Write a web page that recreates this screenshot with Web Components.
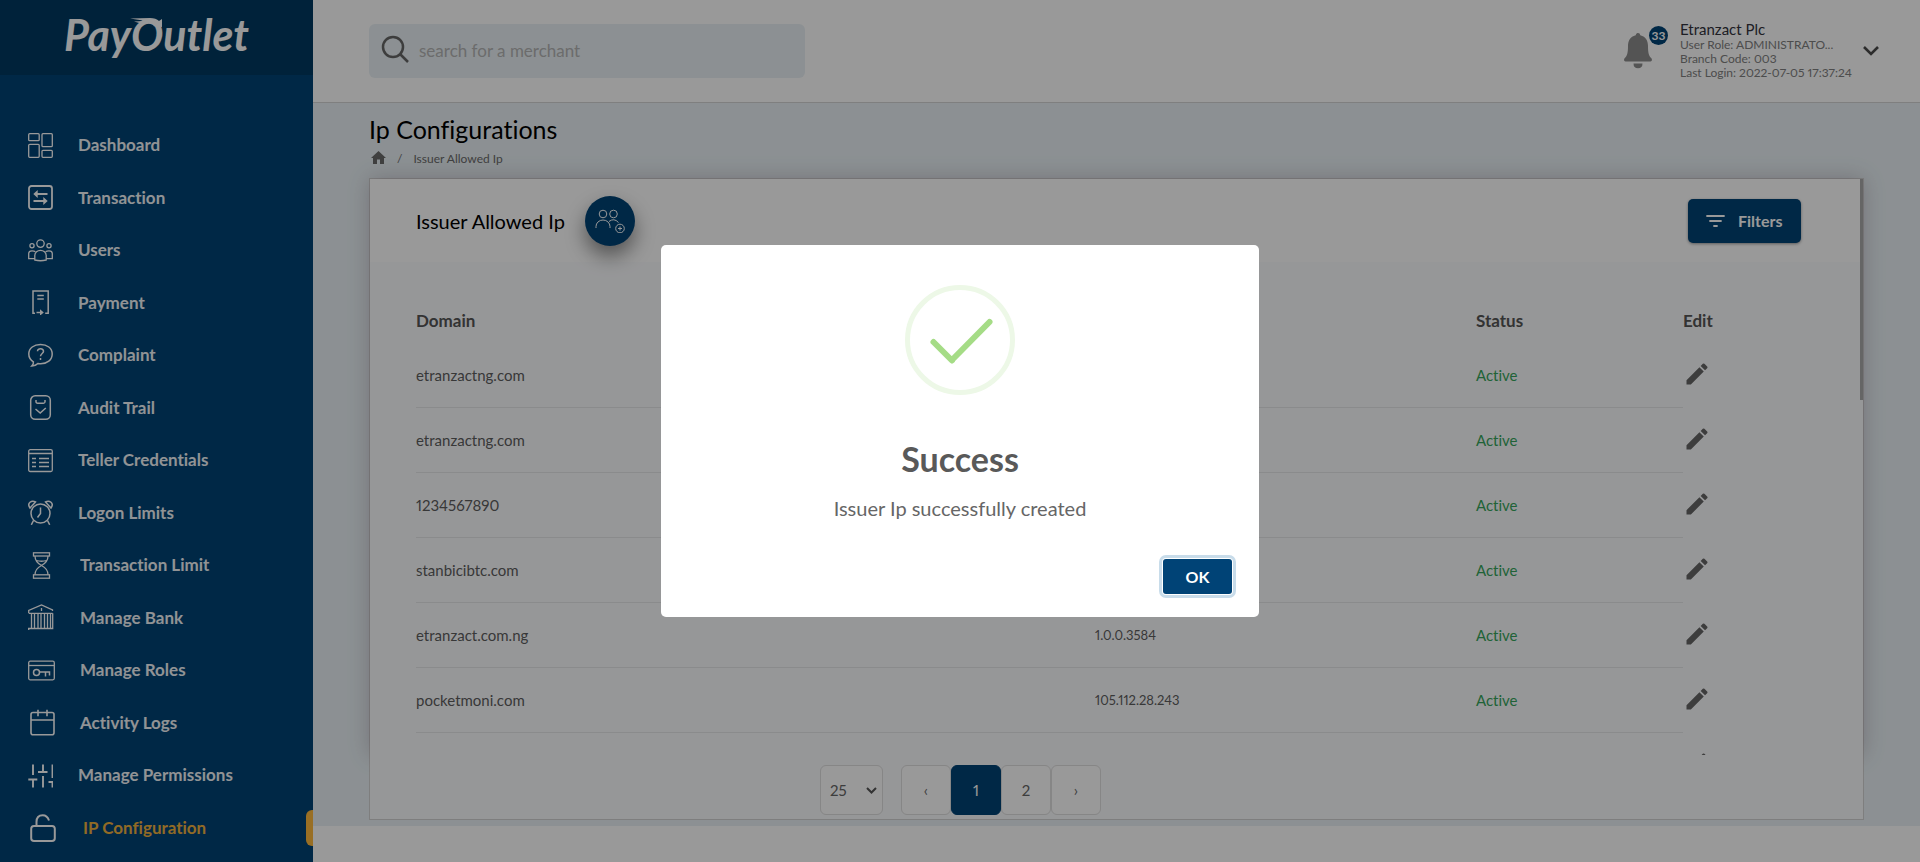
<!DOCTYPE html>
<html lang="en">
<head>
<meta charset="utf-8">
<title>PayOutlet - Ip Configurations</title>
<style>
  body { margin: 0; font-family: Lato, "Liberation Sans", sans-serif; font-variant-ligatures: none; font-variant-numeric: proportional-nums; color: #000; background: #fff; }
</style>
</head>
<body>
<pay-app></pay-app>
<success-dialog heading="Success">Issuer Ip successfully created</success-dialog>
<script>
const BASE = '*{box-sizing:border-box}svg{display:block}button,input,select{font:inherit;font-variant-ligatures:none;margin:0}h1,h2,p,ul{margin:0;padding:0;font-weight:400}';

/* Adds an open shadow root holding the given styles and markup. */
function render(el, css, html) {
  const t = document.createElement('template');
  t.innerHTML = `<style>${BASE}${css}</style>${html}`;
  el.attachShadow({ mode: 'open' }).append(t.content.cloneNode(true));
}

/* Menu icons: [width, height, shapes], one user unit per pixel. */
const ICONS = {
  dashboard: [25, 25, '<g stroke-width="1.3"><rect x=".7" y=".7" width="10.5" height="7" rx="1"/><rect x=".7" y="11.3" width="10.5" height="13" rx="1"/><rect x="14" y=".7" width="10.3" height="13" rx="1"/><rect x="14" y="17.3" width="10.3" height="7" rx="1"/></g>'],
  transaction: [25, 25, '<rect x="1" y="1" width="23" height="23" rx="2.5" stroke-width="1.8"/><path stroke-width="1.8" d="M8 9h11.5M5.5 16H17"/><path fill="currentColor" stroke="none" d="M5.3 9l4.4-4v8zM19.7 16l-4.4-4v8z"/>'],
  users: [25, 25, '<g stroke-width="1.3"><circle cx="12.5" cy="5.6" r="3.7"/><circle cx="4" cy="7.8" r="2.1"/><circle cx="21" cy="7.8" r="2.1"/><path d="M6.8 22v-4.500a5.700 5.200 0 0 1 11.400 0V22q-5.700 1.500-11.400 0zM6.800 20.600H.7v-5q0-2.800 3.300-2.800 2.200 0 3.300.9M18.200 20.600h6.100v-5q0-2.800-3.300-2.800-2.200 0-3.300.9"/></g>'],
  payment: [25, 25, '<path stroke-width="1.5" d="M7 23.200H5V1h15.200v22.200h-3M9.300 5.500h6.500M9.300 9h6.500"/><path stroke-width="1.500" d="M8.500 22.500H14"/><path fill="currentColor" stroke="none" d="M12 19.300l3.800 3.200-3.800 3.200z"/>'],
  complaint: [25, 25, '<path stroke-width="1.5" d="M12.500 1.500C19 1.500 24.200 5 24.200 11s-5.200 9.800-11.500 9.800c-1 0-2-.1-2.800-.2-1.600 1.700-3.900 2.300-6 2.300 1.200-1.100 1.700-2.500 1.500-4C2.500 17 .8 14.300.8 11 .8 5 6 1.500 12.500 1.500z"/><path stroke-width="1.500" d="M9.500 8.300c0-3.600 6-3.400 6 0 0 2.200-3 2.200-3 5M12.500 15v2"/>'],
  audit: [25, 25, '<rect x="2.700" y=".8" width="19.600" height="23.400" rx="4.500" stroke-width="1.500"/><path stroke-width="1.500" d="M8 5v2q.3 1.200 1.500 1.200h6Q16.800 8.200 17 7V5M7.500 14l4.700 4 5.600-5"/>'],
  teller: [25, 25, '<rect x=".7" y="1.700" width="23.600" height="21.800" rx="1.500" stroke-width="1.300"/><path stroke-width="1.300" d="M1 5.500h23M4 10.500h4M11 10.500h10M4 14.500h4M11 14.500h10M4 18.500h4M11 18.500h10"/>'],
  logon: [25, 25, '<circle cx="12.500" cy="13.500" r="9.500" stroke-width="1.500"/><path stroke-width="1.500" d="M12.500 7.500v6l-3 4M5.500 20.500L3.300 24.800M19.500 20.500l2.200 4.300M2 8Q-.5 4.500 2 2.300 4.500.2 7.500 2zM23 8q2.500-3.500 0-5.700Q20.500.2 17.500 2z"/>'],
  limit: [27, 27, '<g stroke-width="1.300"><rect x="5.500" y=".8" width="16" height="3.200"/><rect x="5.500" y="22.800" width="16" height="3.400"/><path d="M7 4q0 6 6.500 9.500Q20 10 20 4M7 22.800q0-6 6.500-9.300Q20 16.800 20 22.800M8.500 8.500Q13.500 10 18.500 8.500"/></g>'],
  bank: [27, 27, '<path stroke-width="1.300" d="M.7 9V6.500L13.500 1l11 5v1M.7 9.300h24M0 24.500h24.700V9.300M.7 26v-1.500M3.500 9.500v15M6.500 9.500v15M10 9.500v15M13 9.500v15M16.500 9.500v15M19.500 9.500v15M22.500 9.500v15M13.500 4v3"/>'],
  roles: [27, 27, '<rect x=".7" y="4.200" width="25.600" height="18.600" rx="1.500" stroke-width="1.300"/><path stroke-width="1.300" d="M1 8.500h25"/><circle cx="8.500" cy="15.500" r="3" stroke-width="1.500"/><path stroke-width="1.500" d="M11.500 15h10v3.500M17.500 15v4.500"/>'],
  activity: [27, 27, '<rect x="3" y="3.500" width="23" height="22.300" rx="2" stroke-width="1.600"/><path stroke-width="1.600" d="M3 11h23M10 .8v6.500M19 .8v6.500"/>'],
  permissions: [25, 25, '<path stroke-width="1.900" d="M5 1.500V12M5 17v7.500M.3 16.500h9M15 1.500V9M15 13v11.500M10 9h9.500M24.500 1.500V15M25 19h-4.500M24.500 19v5.500"/>'],
  ip: [30, 30, '<rect x="3.200" y="13" width="23.600" height="15" rx="2.800" stroke-width="2"/><path stroke-width="2" d="M8.500 13V9q0-6.700 6.200-6.700 4.500 0 6.300 5.200"/>'],
};

customElements.define('pay-icon', class extends HTMLElement {
  connectedCallback() {
    const [w, h, d] = ICONS[this.getAttribute('name')];
    render(this, ':host{display:block;flex:none}', `<svg width="${w}" height="${h}" fill="none" stroke="currentColor" aria-hidden="true">${d}</svg>`);
  }
});

customElements.define('pay-logo', class extends HTMLElement {
  connectedCallback() {
    render(this, `
      :host{display:flex;justify-content:center;height:75px;background:#003962;color:#fff}
      a{position:relative;color:inherit;text-decoration:none;font:italic 700 43px/70px Lato,"Liberation Sans",sans-serif}
      svg{position:absolute;left:66px;top:17px}`,
      `<a href="#">PayOutlet<svg width="36" height="14" fill="#fff" aria-hidden="true"><path d="M0 1.500L20 1Q26 1 29 4L32 2v8l-9-1 3-2Q22 4.500 14 5l-5-.5 4-1z"/><path d="M4 4.500l10-.5-3 2.500z"/></svg></a>`);
  }
});

customElements.define('nav-item', class extends HTMLElement {
  connectedCallback() {
    render(this, `
      :host{display:grid;position:relative;color:#fff}
      a{display:flex;align-items:center;gap:25px;padding-left:28px;color:inherit;text-decoration:none;font-size:17px;font-weight:700;line-height:20px}
      span{opacity:.95}
      :host([active]) span{color:#ffb93d}
      :host([active])::after{content:"";position:absolute;right:0;top:8px;bottom:8px;width:7px;background:#ffb93d;border-radius:6px 0 0 6px}`,
      `<a href="#"><pay-icon name="${this.getAttribute('icon')}"></pay-icon><span><slot></slot></span></a>`);
  }
});

customElements.define('side-bar', class extends HTMLElement {
  connectedCallback() {
    const items = [['dashboard', 'Dashboard'], ['transaction', 'Transaction'], ['users', 'Users'], ['payment', 'Payment'], ['complaint', 'Complaint'], ['audit', 'Audit Trail'], ['teller', 'Teller Credentials'], ['logon', 'Logon Limits'], ['limit', 'Transaction Limit'], ['bank', 'Manage Bank'], ['roles', 'Manage Roles'], ['activity', 'Activity Logs'], ['permissions', 'Manage Permissions'], ['ip', 'IP Configuration']];
    render(this, `
      :host{display:flex;flex-direction:column;background:#004376}
      nav{flex:1;display:grid;grid-auto-rows:1fr;padding:44px 0 8px}`,
      `<pay-logo></pay-logo><nav aria-label="Main">${items.map(([i, t]) => `<nav-item icon="${i}"${i === 'ip' ? ' active' : ''}>${t}</nav-item>`).join('')}</nav>`);
  }
});

customElements.define('top-bar', class extends HTMLElement {
  connectedCallback() {
    render(this, `
      :host{display:flex;align-items:center;height:103px;padding:0 41px 0 56px;background:#fff;border-bottom:1px solid #d4d4d4}
      label{display:flex;align-items:center;width:436px;height:54px;padding:0 12px;gap:10px;background:#e9f1f5;border-radius:6px}
      label svg{flex:none;margin-bottom:4px}
      input{flex:1;min-width:0;border:0;outline:0;background:none;font-size:17px;line-height:24px;padding:0}
      input::placeholder{color:#b4b4b4;opacity:1}
      button{border:0;padding:0;background:none;color:#4a4a4a}
      .bell{position:relative;margin-left:auto;margin-right:28px}
      .badge{position:absolute;left:25px;top:-7px;width:19px;height:19px;border-radius:50%;background:#004376;color:#fff;font-size:12px;line-height:19px;font-weight:700;text-align:center}
      .user{width:183px;margin-bottom:2px;font-size:12px;line-height:14px;color:#808080;white-space:nowrap}
      .user p:first-child{font-size:15px;line-height:18px;color:#32323c}`,
      `<label><svg width="28" height="28" fill="none" stroke="#666" stroke-width="2.500" aria-hidden="true"><circle cx="12" cy="12" r="10"/><path d="M19 19l8 8"/></svg><input type="search" placeholder="search for a merchant" aria-label="Search for a merchant"></label>
       <button class="bell" aria-label="Notifications"><svg width="28" height="36" fill="#8c8c8c" aria-hidden="true"><path d="M14 0q2 0 2.300 2.200C22 3.600 24 8 24 13c0 7 .8 10 3.600 12.500.8 1.600 0 3-1.100 3h-25c-1.200 0-1.900-1.400-1.100-3C3.200 23 4 20 4 13 4 8 6 3.600 11.700 2.200 12 0 14 0 14 0zM9.500 30.500h9q0 4.800-4.500 4.800t-4.500-4.800z"/></svg><span class="badge">33</span></button>
       <div class="user"><p>Etranzact Plc</p><p>User Role: ADMINISTRATO...</p><p>Branch Code: 003</p><p>Last Login: 2022-07-05 17:37:24</p></div>
       <button aria-label="Account menu"><svg width="16" height="10" fill="none" stroke="currentColor" stroke-width="2.600" aria-hidden="true"><path d="M1 1l7 7 7-7"/></svg></button>`);
  }
});

customElements.define('page-head', class extends HTMLElement {
  connectedCallback() {
    render(this, `
      :host{display:block}
      h1{font-size:25px;line-height:30px}
      nav{display:flex;align-items:center;gap:11px;height:20px;margin:4px 0 10px 2px;font-size:12px;color:#6b6b6b}
      a{color:#6b6b6b;margin-bottom:2px}`,
      `<h1>Ip Configurations</h1><nav aria-label="Breadcrumb"><a href="#" aria-label="Home"><svg width="15" height="13" fill="currentColor" aria-hidden="true"><path d="M7.500 0L15 7h-2v6H9V8.500H6V13H2V7H0z"/></svg></a><span>/</span><span>Issuer Allowed Ip</span></nav>`);
  }
});

customElements.define('ip-table', class extends HTMLElement {
  connectedCallback() {
    const rows = [['etranzactng.com', ''], ['etranzactng.com', ''], ['1234567890', ''], ['stanbicibtc.com', ''], ['etranzact.com.ng', '1.0.0.3584'], ['pocketmoni.com', '105.112.28.243'], ['', '']];
    const pencil = '<svg width="28" height="28" viewBox="0 0 24 24" fill="#666" aria-hidden="true"><path d="M3 17.250V21h3.750L17.810 9.940l-3.750-3.750L3 17.250zM20.710 7.040a1 1 0 0 0 0-1.410l-2.340-2.340a1 1 0 0 0-1.410 0l-1.830 1.830 3.750 3.750 1.830-1.830z"/></svg>';
    render(this, `
      :host{display:block;padding:37px 40px 0 46px;background:#fbfcfe}
      table{width:100%;table-layout:fixed;border-collapse:separate;border-spacing:0;text-align:left}
      .ip{width:381px}.status{width:207px}.edit{width:140px}
      th,td{padding:0}
      th{height:44px;padding-bottom:2px;font-size:17px;font-weight:700;color:#555}
      td{height:65px;font-size:15px;color:#5e5e5e;border-bottom:1px solid #e6e8ea}
      td:nth-child(2){font-size:13px}
      td:nth-child(3){color:#36a65c}
      td:last-child{padding-bottom:2px;border-bottom-color:transparent}
      button{display:block;border:0;padding:0;background:none}`,
      `<table><thead><tr><th scope="col">Domain</th><th class="ip" scope="col"></th><th class="status" scope="col">Status</th><th class="edit" scope="col">Edit</th></tr></thead><tbody>${rows.map(([d, ip]) => `<tr><td>${d}</td><td>${ip}</td><td>${d ? 'Active' : ''}</td><td><button aria-label="Edit">${pencil}</button></td></tr>`).join('')}</tbody></table>`);
  }
});

customElements.define('table-pager', class extends HTMLElement {
  connectedCallback() {
    render(this, `
      :host{display:flex;align-items:center;height:64px;padding:6px 0 0 30%;background:#fbfcfe;font-size:15px;color:#777}
      div{position:relative;margin:0 18px 0 2px}
      select{display:block;appearance:none;width:63px;height:50px;padding:0 9px;border:1px solid #dfdfdf;border-radius:6px;background:#fff;color:#666}
      div svg{position:absolute;right:6px;top:22px;pointer-events:none}
      button{width:50px;height:50px;padding:0;border:1px solid #dfdfdf;border-radius:6px;background:#fff;color:#666}
      [aria-current]{background:#004376;border-color:#004376;color:#fff}`,
      `<div><select aria-label="Rows per page"><option>25</option></select><svg width="11" height="7" fill="none" stroke="#555" stroke-width="2" aria-hidden="true"><path d="M1 1l4.500 4.500L10 1"/></svg></div><button aria-label="Previous">‹</button><button aria-current="page">1</button><button>2</button><button aria-label="Next">›</button>`);
  }
});

customElements.define('ip-card', class extends HTMLElement {
  connectedCallback() {
    render(this, `
      :host{display:block;border:1px solid #d3d3d3}
      .scroll{position:relative;height:576px;background:#fff;box-shadow:0 0 20px rgba(90,70,90,.3)}
      .clip{height:100%;overflow:hidden}
      .thumb{position:absolute;right:0;top:0;width:3px;height:221px;background:#a8a8a8}
      header{position:relative;z-index:1;display:flex;align-items:center;height:83px;padding:0 62px 0 46px}
      h2{font-size:20px;line-height:24px;margin-right:20px}
      .add{width:50px;height:50px;border:0;padding:0;border-radius:50%;background:#004376;box-shadow:0 10px 20px rgba(0,0,0,.45);display:grid;place-items:center}
      .filter{margin-left:auto;display:flex;align-items:center;gap:13px;width:113px;height:44px;padding:0 18px;border:0;border-radius:5px;background:#004376;color:#fff;font-size:16px;font-weight:700;box-shadow:0 1px 3px rgba(0,0,0,.4)}
      ip-table,table-pager{position:relative}`,
      `<div class="scroll"><div class="clip"><header><h2>Issuer Allowed Ip</h2>
        <button class="add" aria-label="Add issuer ip"><svg width="30" height="24" fill="none" stroke="#fff" aria-hidden="true"><circle cx="8" cy="5" r="3.800"/><circle cx="18.500" cy="5" r="3.800"/><path d="M1 19v-1.500a7 6.500 0 0 1 14 0V19M14 12.500q5-4 9.500 1"/><circle cx="25" cy="19.500" r="4.300"/><path d="M23 19.500h4M25 17.500v4"/></svg></button>
        <button class="filter"><svg width="19" height="12" fill="none" stroke="#fff" stroke-width="1.800" stroke-linecap="round" aria-hidden="true"><path d="M1 1h17M4 6h11M8 11h3"/></svg>Filters</button></header>
        <ip-table></ip-table></div><div class="thumb"></div></div><table-pager></table-pager>`);
  }
});

customElements.define('pay-app', class extends HTMLElement {
  connectedCallback() {
    render(this, `
      :host{display:grid;grid-template-columns:313px 1fr;min-height:100vh}
      .page{display:flex;flex-direction:column;min-width:0}
      main{padding:11px 56px 6px;background:#e9f1f5}
      footer{flex:1;background:#fff}`,
      `<side-bar></side-bar><div class="page"><top-bar></top-bar><main><page-head></page-head><ip-card></ip-card></main><footer></footer></div>`);
  }
});

customElements.define('success-dialog', class extends HTMLElement {
  connectedCallback() {
    render(this, `
      :host{position:fixed;inset:0;z-index:10;display:grid;place-items:center;background:rgba(0,0,0,.4)}
      section{display:flex;flex-direction:column;align-items:center;width:598px;padding:40px 27px 23px;border-radius:5px;background:#fff}
      h2{margin-top:43px;font-size:34px;line-height:42px;font-weight:700;color:#595959}
      p{margin-top:15px;font-size:20px;line-height:26px;color:#666}
      button{align-self:flex-end;margin-top:38px;width:69px;height:35px;border:0;outline:0;padding:0;border-radius:3px;background:#004376;color:#fff;font-size:16px;font-weight:700;box-shadow:0 0 0 1px #fff,0 0 0 4px #c8dcea}`,
      `<section role="dialog" aria-modal="true" aria-labelledby="t"><svg width="110" height="110" fill="none" aria-hidden="true"><circle cx="55" cy="55" r="52.500" stroke="#edf8e7" stroke-width="5"/><g stroke="#a5dc86" stroke-width="6" stroke-linecap="round"><path d="M28.500 57L47 75.500M47 75L84.500 37"/></g></svg>
       <h2 id="t">${this.getAttribute('heading')}</h2><p><slot></slot></p><button autofocus>OK</button></section>`);
  }
});
</script>
</body>
</html>
